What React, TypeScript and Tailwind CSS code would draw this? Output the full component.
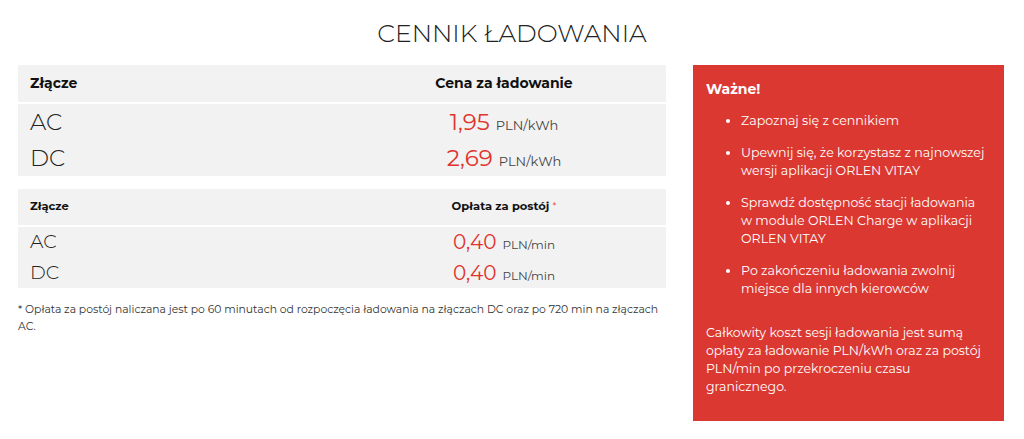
import React from "react";

const font = { fontFamily: "Montserrat, 'Open Sans', 'Noto Sans', sans-serif" };

function Row({ label, price, unit, big }: { label: string; price: string; unit: string; big: boolean }) {
  return (
    <div className={`grid grid-cols-2 items-center ${big ? "h-[36px]" : "h-[30.5px]"}`}>
      <div className={`pl-[12px] text-[#222] font-light ${big ? "text-[23px]" : "text-[19px]"}`}>{label}</div>
      <div className="flex items-baseline justify-center">
        <span className={`text-[#e0332b] font-normal ${big ? "text-[23px]" : "text-[20px]"}`}>{price}</span>
        <span className={`ml-[6px] text-[#444] ${big ? "text-[13px]" : "text-[12px]"}`}>{unit}</span>
      </div>
    </div>
  );
}

export default function App() {
  return (
    <div className="w-[1024px] h-[439px] bg-white overflow-hidden" style={font}>
      <h1 className="pt-[16px] text-center text-[25px] font-light text-[#222] leading-[34px]">
        CENNIK ŁADOWANIA
      </h1>
      <div className="mt-[15px] ml-[18px] flex gap-[27px]">
        <div className="w-[648px]">
          <div>
            <div className="grid grid-cols-2 items-center h-[37px] bg-[#f2f2f2]">
              <div className="pl-[12px] text-[14px] font-bold text-[#111]">Złącze</div>
              <div className="text-center text-[14px] font-bold text-[#111]">Cena za ładowanie</div>
            </div>
            <div className="mt-[2px] bg-[#f2f2f2]">
              <Row label="AC" price="1,95" unit="PLN/kWh" big />
              <Row label="DC" price="2,69" unit="PLN/kWh" big />
            </div>
          </div>
          <div className="mt-[13px]">
            <div className="grid grid-cols-2 items-center h-[36px] bg-[#f2f2f2]">
              <div className="pl-[12px] text-[11.5px] font-bold text-[#111]">Złącze</div>
              <div className="text-center text-[11.5px] font-bold text-[#111]">
                Opłata za postój <span className="text-[#e0332b] font-normal align-top text-[10px]">*</span>
              </div>
            </div>
            <div className="mt-[2px] bg-[#f2f2f2]">
              <Row label="AC" price="0,40" unit="PLN/min" big={false} />
              <Row label="DC" price="0,40" unit="PLN/min" big={false} />
            </div>
          </div>
          <p className="mt-[13px] text-[10.8px] leading-[17px] text-[#333]">
            * Opłata za postój naliczana jest po 60 minutach od rozpoczęcia ładowania na złączach DC oraz po 720 min na złączach AC.
          </p>
        </div>
        <div className="w-[311px] h-[356px] bg-[#db3832] text-white px-[13px] pt-[14px]">
          <div className="text-[14px] font-bold leading-[20px]">Ważne!</div>
          <ul className="mt-[13px] pl-[35px] list-disc text-[12.6px] leading-[18px] space-y-[14px] whitespace-nowrap">
            <li>Zapoznaj się z cennikiem</li>
            <li>
              Upewnij się, że korzystasz z najnowszej
              <br />
              wersji aplikacji ORLEN VITAY
            </li>
            <li>
              Sprawdź dostępność stacji ładowania
              <br />w module ORLEN Charge w aplikacji
              <br />
              ORLEN VITAY
            </li>
            <li>
              Po zakończeniu ładowania zwolnij
              <br />
              miejsce dla innych kierowców
            </li>
          </ul>
          <p className="mt-[26px] text-[12.5px] leading-[18px] whitespace-nowrap">
            Całkowity koszt sesji ładowania jest sumą
            <br />
            opłaty za ładowanie PLN/kWh oraz za postój
            <br />
            PLN/min po przekroczeniu czasu
            <br />
            granicznego.
          </p>
        </div>
      </div>
    </div>
  );
}
